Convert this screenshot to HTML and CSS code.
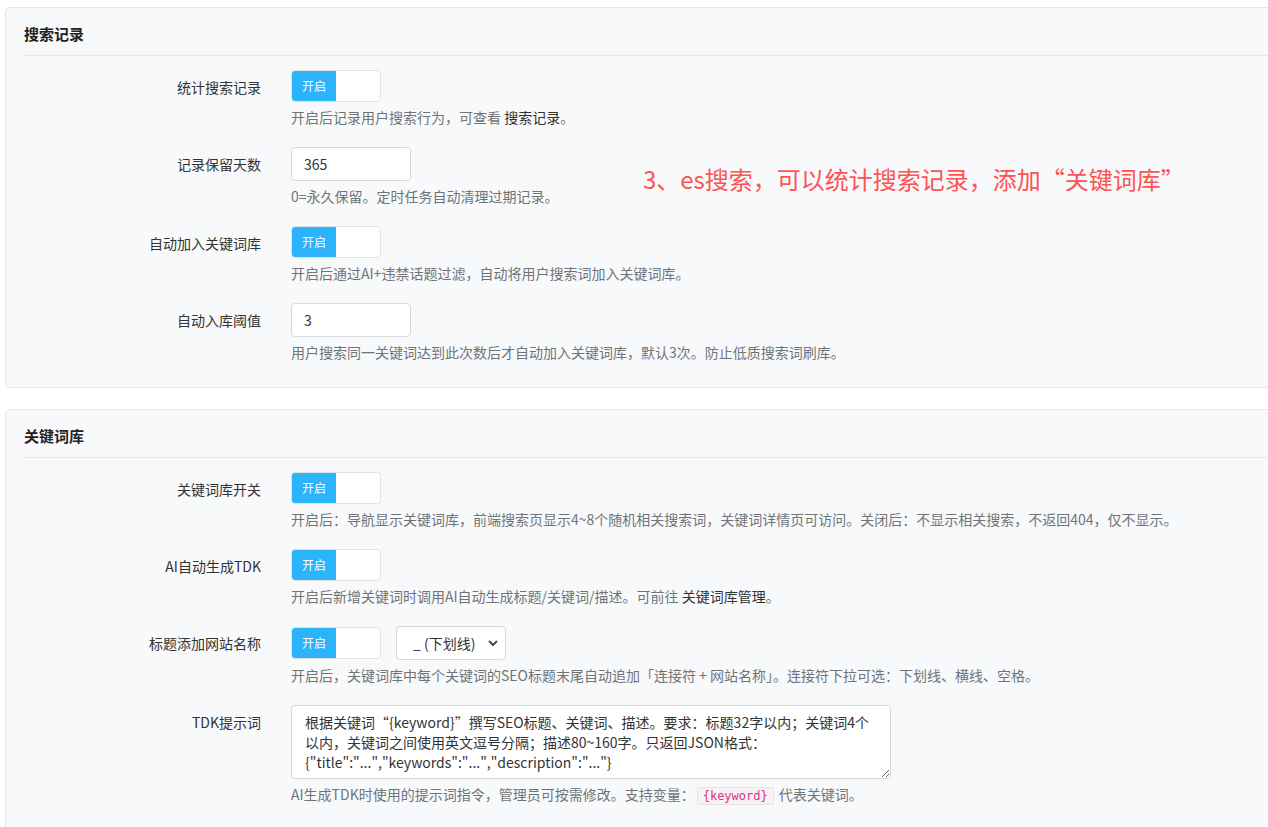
FILE: index.html
```html
<!DOCTYPE html>
<html lang="zh-CN">

<head>
  <meta charset="UTF-8" />
  <meta name="viewport" content="width=device-width, initial-scale=1.0" />
  <title>搜索设置</title>
  <link rel="stylesheet" href="styles.css">
</head>

<body>
  <div class="page">

    <!-- 搜索记录 -->
    <div class="panel">
      <div class="panel-head">搜索记录</div>
      <div class="panel-body">
        <div class="form-row">
          <label class="form-label">统计搜索记录</label>
          <div class="form-field">
            <div class="switch"><span class="switch-on">开启</span><span class="switch-off"></span></div>
            <p class="help">开启后记录用户搜索行为，可查看 <a href="#">搜索记录</a>。</p>
          </div>
        </div>
        <div class="form-row">
          <label class="form-label">记录保留天数</label>
          <div class="form-field">
            <input class="input" type="text" value="365" />
            <p class="help">0=永久保留。定时任务自动清理过期记录。</p>
          </div>
        </div>
        <div class="form-row">
          <label class="form-label">自动加入关键词库</label>
          <div class="form-field">
            <div class="switch"><span class="switch-on">开启</span><span class="switch-off"></span></div>
            <p class="help">开启后通过AI+违禁话题过滤，自动将用户搜索词加入关键词库。</p>
          </div>
        </div>
        <div class="form-row">
          <label class="form-label">自动入库阈值</label>
          <div class="form-field">
            <input class="input" type="text" value="3" />
            <p class="help">用户搜索同一关键词达到此次数后才自动加入关键词库，默认3次。防止低质搜索词刷库。</p>
          </div>
        </div>
      </div>
    </div>

    <!-- 关键词库 -->
    <div class="panel">
      <div class="panel-head">关键词库</div>
      <div class="panel-body">
        <div class="form-row">
          <label class="form-label">关键词库开关</label>
          <div class="form-field">
            <div class="switch"><span class="switch-on">开启</span><span class="switch-off"></span></div>
            <p class="help">开启后：导航显示关键词库，前端搜索页显示4~8个随机相关搜索词，关键词详情页可访问。关闭后：不显示相关搜索，不返回404，仅不显示。</p>
          </div>
        </div>
        <div class="form-row">
          <label class="form-label">AI自动生成TDK</label>
          <div class="form-field">
            <div class="switch"><span class="switch-on">开启</span><span class="switch-off"></span></div>
            <p class="help">开启后新增关键词时调用AI自动生成标题/关键词/描述。可前往 <a href="#">关键词库管理</a>。</p>
          </div>
        </div>
        <div class="form-row">
          <label class="form-label">标题添加网站名称</label>
          <div class="form-field">
            <div class="inline">
              <div class="switch"><span class="switch-on">开启</span><span class="switch-off"></span></div>
              <div class="select-wrap">
                <select class="select">
                  <option>_ (下划线)</option>
                  <option>- (横线)</option>
                  <option>空格</option>
                </select>
                <svg class="select-arrow" width="10" height="10" viewBox="0 0 10 10"><path d="M1.5 3.5 L5 7 L8.5 3.5" fill="none" stroke="#444" stroke-width="1.8" stroke-linecap="round" stroke-linejoin="round"/></svg>
              </div>
            </div>
            <p class="help">开启后，关键词库中每个关键词的SEO标题末尾自动追加「连接符 + 网站名称」。连接符下拉可选：下划线、横线、空格。</p>
          </div>
        </div>
        <div class="form-row">
          <label class="form-label">TDK提示词</label>
          <div class="form-field">
            <textarea class="textarea" rows="3">根据关键词“{keyword}”撰写SEO标题、关键词、描述。要求：标题32字以内；关键词4个以内，关键词之间使用英文逗号分隔；描述80~160字。只返回JSON格式：{"title":"...","keywords":"...","description":"..."}</textarea>
            <p class="help">AI生成TDK时使用的提示词指令，管理员可按需修改。支持变量：<code>{keyword}</code> 代表关键词。</p>
          </div>
        </div>
      </div>
    </div>

    <div class="note">3、es搜索，可以统计搜索记录，添加“关键词库”</div>
  </div>
</body>

</html>
```

FILE: styles.css
```css
body {
  margin: 0;
  background: #fff;
  font-family: "Noto Sans CJK SC", "Noto Sans", sans-serif;
  font-size: 14px;
  color: #333;
}

.page {
  position: relative;
  padding: 7px 0 0 5px;
  overflow: hidden;
  height: 820px;
}

/* Panels */
.panel {
  background: #f8f9fb;
  border: 1px solid #e3e6ea;
  border-radius: 5px;
  margin-right: -20px;
  margin-bottom: 21px;
  padding: 0 0 0 18px;
}

.panel-head {
  font-size: 15px;
  font-weight: bold;
  color: #222;
  line-height: 20px;
  padding: 16px 0 11px;
  border-bottom: 1px solid #e3e6ea;
}

.panel-body {
  padding: 14px 0 5px;
}

/* Form rows */
.form-row {
  display: flex;
  gap: 30px;
  margin-bottom: 20px;
}

.form-label {
  width: 237px;
  flex-shrink: 0;
  text-align: right;
  line-height: 34px;
  color: #333;
}

.form-field {
  flex: 1;
}

.help {
  margin: 5px 0 0;
  line-height: 20px;
  color: #707478;
}

.help a {
  color: #333;
  text-decoration: none;
}

.help code {
  font-family: "DejaVu Sans Mono", monospace;
  font-size: 12px;
  color: #d63384;
  background: #f9f2f4;
  border: 1px solid #e8e4e6;
  border-radius: 3px;
  padding: 1px 5px;
  margin: 0 2px;
}

/* Switch */
.switch {
  display: flex;
  width: 88px;
  height: 30px;
  border: 1px solid #dfe3e8;
  border-radius: 4px;
  overflow: hidden;
  background: #fff;
}

.switch-on {
  width: 44px;
  background: #2bb4fa;
  color: #fff;
  font-size: 12px;
  line-height: 30px;
  text-align: center;
}

.switch-off {
  flex: 1;
}

/* Inputs */
.input {
  box-sizing: border-box;
  width: 120px;
  height: 34px;
  padding: 0 12px;
  border: 1px solid #d4d7dc;
  border-radius: 4px;
  background: #fff;
  font: inherit;
  color: #333;
  outline: none;
}

.inline {
  display: flex;
  align-items: center;
  gap: 15px;
}

.select-wrap {
  position: relative;
}

.select {
  appearance: none;
  box-sizing: border-box;
  width: 110px;
  height: 34px;
  padding: 0 0 0 16px;
  border: 1px solid #d4d7dc;
  border-radius: 4px;
  background: #fff;
  font: inherit;
  color: #333;
  outline: none;
}

.select-arrow {
  position: absolute;
  right: 8px;
  top: 12px;
}

.textarea {
  display: block;
  box-sizing: border-box;
  width: 600px;
  height: 74px;
  padding: 6px 12px 6px 13px;
  border: 1px solid #d4d7dc;
  border-radius: 4px;
  background: #fff;
  font: inherit;
  line-height: 20px;
  color: #333;
  outline: none;
  resize: vertical;
}

/* Annotation overlay */
.note {
  position: absolute;
  left: 643px;
  top: 162px;
  font-size: 24px;
  line-height: 34px;
  color: #ff5252;
}
```
